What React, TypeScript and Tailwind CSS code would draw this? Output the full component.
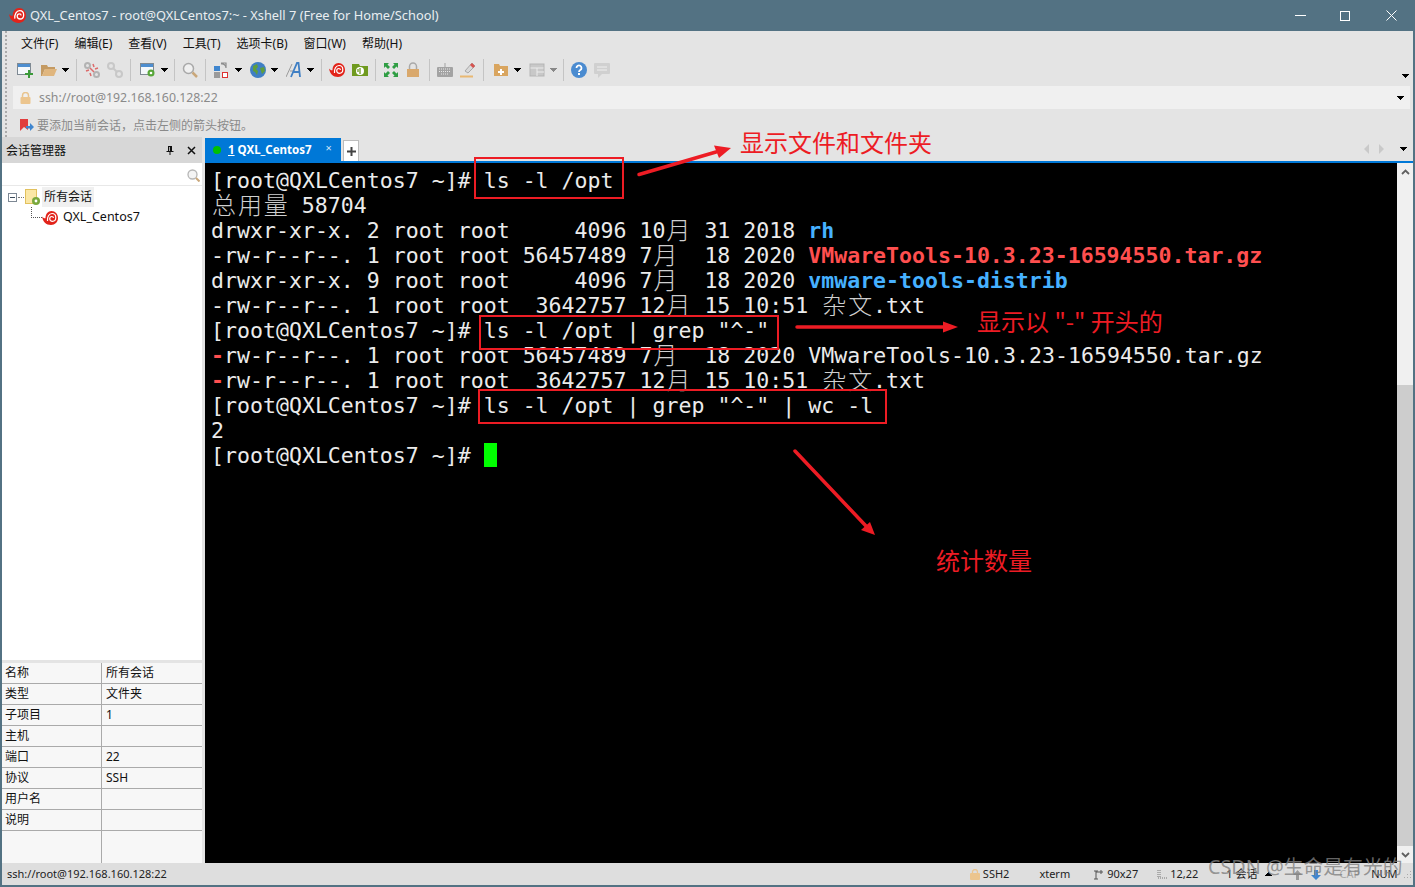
import { ReactNode } from 'react';

const uiFont = "font-['Noto_Sans','Noto_Sans_CJK_SC',sans-serif]";

function Shell({ size = 16 }: { size?: number }) {
  return (
    <svg width={size} height={size} viewBox="0 0 16 16" className="shrink-0">
      <path d="M0 6.500C1 8 2.500 8.500 3.500 8.200 3.500 4 6 1 9.500 1 13.200 1 16 4 16 8c0 4-3 7-7 7C4 15 .800 11.500 0 6.500z" fill="#e2231a" />
      <path d="M5.500 11c-.5-4 1.500-7.500 4.500-7.500 2.500 0 3.800 2 3.800 4 0 2.300-1.600 3.800-3.400 3.800-1.600 0-2.700-1.100-2.700-2.500 0-1.300.9-2.300 2.100-2.300 1 0 1.600.7 1.600 1.500" fill="none" stroke="#fff" strokeWidth="1.200" />
    </svg>
  );
}

function Caret({ color = '#000' }: { color?: string }) {
  return (
    <svg width="7" height="4" viewBox="0 0 7 4" className="shrink-0">
      <path d="M0 0h7v1H6v1H5v1H4v1H3V3H2V2H1V1H0z" fill={color} />
    </svg>
  );
}

function Sep({ ml }: { ml: string }) {
  return <div className={`h-[22px] w-px shrink-0 bg-[#c4c4c4] ${ml}`} />;
}

function ToolIcon({ children }: { children: ReactNode }) {
  return (
    <svg width="16" height="16" viewBox="0 0 16 16" className="shrink-0">
      {children}
    </svg>
  );
}

function Toolbar() {
  return (
    <div className="flex h-[31px] items-center pb-px pl-[10px]">
      <ToolIcon>
        <rect x="0.500" y="1.500" width="13" height="11" fill="#f4f8fb" stroke="#7f8a93" />
        <rect x="1" y="2" width="12" height="3" fill="#4d8ed0" />
        <path d="M11 8h2v3h3v2h-3v3h-2v-3H8v-2h3z" fill="#3a9a3a" />
      </ToolIcon>
      <div className="ml-[8px]">
        <ToolIcon>
          <path d="M0 3h6l1 2h7v2H4L1 14H0z" fill="#c49a62" />
          <path d="M4 7h12l-3 7H1z" fill="#e0b67e" />
        </ToolIcon>
      </div>
      <div className="ml-[5px]"><Caret /></div>
      <Sep ml="ml-[7px]" />
      <div className="ml-[7px]">
        <ToolIcon>
          <circle cx="3.500" cy="3.500" r="2.500" fill="none" stroke="#b3b3b3" strokeWidth="2" />
          <circle cx="12.500" cy="12.500" r="2.500" fill="none" stroke="#b3b3b3" strokeWidth="2" />
          <path d="M6 6l4 4M2 9l3-1M9 2l1 3M14 6l-3 1M7 14l-1-3" stroke="#dd6b6b" strokeWidth="1.500" />
        </ToolIcon>
      </div>
      <div className="ml-[7px]">
        <ToolIcon>
          <circle cx="4" cy="4" r="3" fill="none" stroke="#c8c8c8" strokeWidth="2" />
          <circle cx="12" cy="12" r="3" fill="none" stroke="#c8c8c8" strokeWidth="2" />
          <path d="M6 6l4 4" stroke="#c8c8c8" strokeWidth="2" />
        </ToolIcon>
      </div>
      <Sep ml="ml-[7px]" />
      <div className="ml-[9px]">
        <ToolIcon>
          <rect x="0.500" y="1.500" width="13" height="11" fill="#f4f8fb" stroke="#7f8a93" />
          <rect x="1" y="2" width="12" height="3" fill="#4d8ed0" />
          <circle cx="11" cy="11" r="3.500" fill="#57a639" />
          <circle cx="11" cy="11" r="1.300" fill="#fff" />
        </ToolIcon>
      </div>
      <div className="ml-[5px]"><Caret /></div>
      <Sep ml="ml-[6px]" />
      <div className="ml-[7px]">
        <ToolIcon>
          <circle cx="6.500" cy="6.500" r="5" fill="#f0f0f0" stroke="#a9a9a9" strokeWidth="1.500" />
          <path d="M10.500 10.500l4.500 4.500" stroke="#c9a77a" strokeWidth="2.500" />
        </ToolIcon>
      </div>
      <Sep ml="ml-[7px]" />
      <div className="ml-[8px]">
        <ToolIcon>
          <rect x="0" y="4" width="6" height="5" fill="#3f86cf" />
          <rect x="0" y="10" width="6" height="6" fill="#9a9a9a" />
          <rect x="8.500" y="10.500" width="5" height="5" fill="#fff" stroke="#d33" />
          <path d="M7 1h5v5M12 6a4 4 0 0 0-5-4" fill="none" stroke="#8c8c8c" strokeWidth="1.200" />
        </ToolIcon>
      </div>
      <div className="ml-[5px]"><Caret /></div>
      <div className="ml-[8px]">
        <ToolIcon>
          <circle cx="8" cy="8" r="8" fill="#3f7fc4" />
          <path d="M3 4l4-2 1 3-2 2 2 2-1 4-2-3-2-1zM10 6l4-1 1 4-3 3-1-3z" fill="#5f9e3c" />
        </ToolIcon>
      </div>
      <div className="ml-[5px]"><Caret /></div>
      <div className="ml-[8px]">
        <ToolIcon>
          <path d="M0 15L6 2M4 9h4" stroke="#9a9a9a" strokeWidth="1" fill="none" />
          <path d="M5 15L11 1h1.500L14 15M7.500 10h6" stroke="#3f7fc4" strokeWidth="1.800" fill="none" />
        </ToolIcon>
      </div>
      <div className="ml-[5px]"><Caret /></div>
      <Sep ml="ml-[7px]" />
      <div className="ml-[7px]"><Shell /></div>
      <div className="ml-[7px]">
        <ToolIcon>
          <path d="M0 2h7l1 2h8v10H0z" fill="#6f9a1f" />
          <circle cx="8" cy="9" r="4" fill="#fff" />
          <path d="M8 6v6M6 7v3" stroke="#6f9a1f" strokeWidth="1.300" />
        </ToolIcon>
      </div>
      <Sep ml="ml-[7px]" />
      <div className="ml-[7px]">
        <ToolIcon>
          <path d="M1 1h5L4.500 2.500 7 5 5 7 2.500 4.500 1 6zM15 1v5l-1.500-1.500L11 7 9 5l2.500-2.500L10 1zM1 15v-5l1.500 1.500L5 9l2 2-2.500 2.500L6 15zM15 15h-5l1.500-1.500L9 11l2-2 2.500 2.500L15 10z" fill="#2f9e44" />
        </ToolIcon>
      </div>
      <div className="ml-[6px]">
        <ToolIcon>
          <path d="M4.500 7V4.500a3.500 3.500 0 0 1 7 0V7" fill="none" stroke="#a9a9a9" strokeWidth="1.500" />
          <rect x="2" y="7" width="12" height="8" fill="#d9a86c" />
        </ToolIcon>
      </div>
      <Sep ml="ml-[8px]" />
      <div className="ml-[7px]">
        <ToolIcon>
          <rect x="0" y="5" width="16" height="10" rx="1" fill="#a3a3a3" />
          <path d="M2 7h12M2 9.500h12M4 12h8" stroke="#e8e8e8" strokeDasharray="1 1" />
          <path d="M8 5V1" stroke="#a3a3a3" />
        </ToolIcon>
      </div>
      <div className="ml-[7px]">
        <ToolIcon>
          <path d="M5 9l7-8 3 3-7 7z" fill="#d9d9d9" stroke="#a8a8a8" />
          <path d="M12 1l3 3-2 2-3-3z" fill="#d9534f" />
          <path d="M0 14.500h13" stroke="#e9b872" strokeWidth="2" />
        </ToolIcon>
      </div>
      <Sep ml="ml-[7px]" />
      <div className="ml-[9px]">
        <ToolIcon>
          <path d="M1 2h5l1 2h8v10H1z" fill="#d9a55f" />
          <path d="M7 7h2v2h2v2H9v2H7v-2H5V9h2z" fill="#fff" />
        </ToolIcon>
      </div>
      <div className="ml-[5px]"><Caret /></div>
      <div className="ml-[8px]">
        <ToolIcon>
          <rect x="1" y="2" width="14" height="12" fill="#c8c8c8" stroke="#b5b5b5" />
          <path d="M1.500 6h13M8 6v8M8 10h7" stroke="#ececec" />
        </ToolIcon>
      </div>
      <div className="ml-[5px]"><Caret color="#888" /></div>
      <Sep ml="ml-[6px]" />
      <div className="ml-[7px]">
        <ToolIcon>
          <circle cx="8" cy="8" r="8" fill="#4a8bd0" />
          <path d="M5.500 6a2.500 2.500 0 1 1 3.800 2.100C8.400 8.700 8 9.200 8 10" fill="none" stroke="#fff" strokeWidth="1.800" />
          <rect x="7" y="11" width="2" height="2" fill="#fff" />
        </ToolIcon>
      </div>
      <div className="ml-[7px]">
        <ToolIcon>
          <path d="M1 1h14a1 1 0 0 1 1 1v9a1 1 0 0 1-1 1H8l-4 4v-4H1a1 1 0 0 1-1-1V2a1 1 0 0 1 1-1z" fill="#d0d0d0" />
          <path d="M3 5h10M3 8h10" stroke="#efefef" />
        </ToolIcon>
      </div>
      <div className="ml-auto mr-[4px] mt-[11px]"><Caret /></div>
    </div>
  );
}

function TitleBar() {
  return (
    <div className="flex h-[31px] shrink-0 items-center bg-[#537283] pl-[7px] text-white">
      <Shell size={17} />
      <span className="ml-[4px] text-[12.800px] text-[#e9eef1]">
        QXL_Centos7 - root@QXLCentos7:~ - Xshell 7 (Free for Home/School)
      </span>
      <div className="ml-auto flex items-center">
        <div className="h-[1px] w-[11px] bg-white" />
        <div className="ml-[34px] size-[10px] border border-white" />
        <svg width="11" height="11" viewBox="0 0 11 11" className="ml-[36px] mr-[16px]">
          <path d="M.500.500l10 10M10.500.500l-10 10" stroke="#fff" strokeWidth="1" />
        </svg>
      </div>
    </div>
  );
}

const menus = ['文件(F)', '编辑(E)', '查看(V)', '工具(T)', '选项卡(B)', '窗口(W)', '帮助(H)'];

function TopBars() {
  return (
    <div className="flex h-[106px] shrink-0 bg-[#e4e4e4]">
      <div className="ml-[3px] h-full w-[2px] border-l-2 border-dotted border-[#aaaaaa]" />
      <div className="min-w-0 flex-1">
        <div className="flex h-[24px] items-center gap-[16px] pl-[14px] pt-px text-[12px] text-[#111]">
          {menus.map((m) => (
            <span key={m}>{m}</span>
          ))}
        </div>
        <Toolbar />
        <div className="ml-[6px] mr-[3px] flex h-[23px] items-center bg-[#f0f0f0] pl-[7px] pr-[6px] pt-px text-[12.300px] text-[#8a8a8a]">
          <svg width="11" height="12" viewBox="0 0 11 12">
            <path d="M2.500 6V3.500a3 3 0 0 1 6 0V6" fill="none" stroke="#e8c48f" strokeWidth="1.500" />
            <rect x="0.500" y="5" width="10" height="7" rx="1" fill="#ecc58e" />
          </svg>
          <span className="ml-[8px]">ssh://root@192.168.160.128:22</span>
          <div className="ml-auto"><Caret /></div>
        </div>
        <div className="flex h-[28px] items-center pl-[13px] pt-[5px] text-[12px] text-[#8a8a8a]">
          <svg width="14" height="14" viewBox="0 0 14 14">
            <path d="M0 0h8v11L4 8l-4 4z" fill="#e23d3d" />
            <path d="M6 7h4V4l4 4-4 4V9.500H6z" fill="#3f86cf" />
          </svg>
          <span className="ml-[3px]">要添加当前会话，点击左侧的箭头按钮。</span>
        </div>
      </div>
    </div>
  );
}

const props = [
  ['名称', '所有会话'],
  ['类型', '文件夹'],
  ['子项目', '1'],
  ['主机', ''],
  ['端口', '22'],
  ['协议', 'SSH'],
  ['用户名', ''],
  ['说明', ''],
];

function SessionPanel() {
  return (
    <div className="flex w-[200px] shrink-0 flex-col bg-white text-[12px] text-[#111]">
      <div className="flex h-[26px] shrink-0 items-center bg-[#d7d7d7] pl-[4px] pt-px">
        <span>会话管理器</span>
        <svg width="8" height="9" viewBox="0 0 8 9" className="ml-auto">
          <path d="M2 0h4v5h1.500v1H4.500v3h-1V6H.500V5H2zM3 1v4h.800V1z" fill="#111" />
        </svg>
        <svg width="9" height="9" viewBox="0 0 9 9" className="ml-[13px] mr-[6px]">
          <path d="M1 1l7 7M8 1L1 8" stroke="#111" strokeWidth="1.500" />
        </svg>
      </div>
      <div className="mt-[2px] flex h-[20px] shrink-0 items-center justify-end pr-[2px]">
        <svg width="13" height="13" viewBox="0 0 13 13">
          <circle cx="5.500" cy="5.500" r="4.500" fill="#f4f4f4" stroke="#b5b5b5" strokeWidth="1.300" />
          <path d="M9 9l3.500 3.500" stroke="#c9a77a" strokeWidth="2" />
        </svg>
      </div>
      <div className="flex-1 border-t border-[#e8e8e8] pt-[1px]">
        <div className="flex h-[20px] items-center pl-[6px]">
          <div className="flex size-[9px] items-center justify-center border border-[#7d8894]">
            <div className="h-px w-[5px] bg-[#3a4a5a]" />
          </div>
          <div className="ml-[1px] w-[6px] border-t border-dotted border-[#777]" />
          <svg width="16" height="17" viewBox="0 0 16 17" className="ml-[1px]">
            <rect x="0.500" y="0.500" width="11" height="14" fill="#fbe7a6" stroke="#e2c15e" />
            <circle cx="11" cy="12" r="4" fill="#7aa83c" />
            <circle cx="11" cy="12" r="1.400" fill="#fff" />
          </svg>
          <span className="ml-[1px] flex h-[20px] w-[52px] items-center bg-[#f0f0f0] pl-[2px]">所有会话</span>
        </div>
        <div className="flex h-[21px] items-center pl-[29px]">
          <div className="h-[11px] w-[11px] -translate-y-[5px] border-b border-l border-dotted border-[#555]" />
          <Shell size={16} />
          <span className="ml-[5px] text-[12.500px]">QXL_Centos7</span>
        </div>
      </div>
      <div className="h-[3px] shrink-0 bg-[#e4e4e4]" />
      <div className="shrink-0 bg-[#f7f7f7]">
        {props.map(([k, v]) => (
          <div key={k} className="flex h-[21px] border-b border-[#aaaaaa]">
            <div className="flex w-[100px] items-center border-r border-[#aaaaaa] pl-[3px]">{k}</div>
            <div className="flex items-center pl-[4px]">{v}</div>
          </div>
        ))}
        <div className="h-[32px] w-[100px] border-r border-[#aaaaaa]" />
      </div>
    </div>
  );
}

// one terminal cell is about 12.97px wide, CJK chars take two of them
function Term({ text }: { text: string }) {
  return (
    <>
      {Array.from(text).map((ch, i) =>
        /[\u4e00-\u9fff]/.test(ch) ? (
          <span
            key={i}
            className="relative top-[-2px] inline-block w-[25.950px] text-center align-top font-['Noto_Sans_CJK_SC',sans-serif] text-[24px] leading-[25px] font-light text-[#cfcfcf]"
          >
            {ch}
          </span>
        ) : (
          <span key={i}>{ch}</span>
        ),
      )}
    </>
  );
}

const prompt = '[root@QXLCentos7 ~]# ';

function Terminal() {
  return (
    <div className="min-w-0 flex-1 bg-black pl-[6px] pt-[5px] font-['DejaVu_Sans_Mono',monospace] text-[21.550px] leading-[25px] whitespace-pre text-[#ebebeb]">
      <div className="h-[25px]"><Term text={prompt + 'ls -l /opt'} /></div>
      <div className="h-[25px]"><Term text="总用量 58704" /></div>
      <div className="h-[25px]">
        <Term text="drwxr-xr-x. 2 root root     4096 10月 31 2018 " />
        <span className="font-bold text-[#46b1ff]">rh</span>
      </div>
      <div className="h-[25px]">
        <Term text="-rw-r--r--. 1 root root 56457489 7月  18 2020 " />
        <span className="font-bold text-[#ff4f4f]">VMwareTools-10.3.23-16594550.tar.gz</span>
      </div>
      <div className="h-[25px]">
        <Term text="drwxr-xr-x. 9 root root     4096 7月  18 2020 " />
        <span className="font-bold text-[#46b1ff]">vmware-tools-distrib</span>
      </div>
      <div className="h-[25px]"><Term text="-rw-r--r--. 1 root root  3642757 12月 15 10:51 杂文.txt" /></div>
      <div className="h-[25px]"><Term text={prompt + 'ls -l /opt | grep "^-"'} /></div>
      <div className="h-[25px]">
        <span className="font-bold text-[#ff4f4f]">-</span>
        <Term text="rw-r--r--. 1 root root 56457489 7月  18 2020 VMwareTools-10.3.23-16594550.tar.gz" />
      </div>
      <div className="h-[25px]">
        <span className="font-bold text-[#ff4f4f]">-</span>
        <Term text="rw-r--r--. 1 root root  3642757 12月 15 10:51 杂文.txt" />
      </div>
      <div className="h-[25px]"><Term text={prompt + 'ls -l /opt | grep "^-" | wc -l'} /></div>
      <div className="h-[25px]">2</div>
      <div className="flex h-[25px]">
        <Term text={prompt} />
        <div className="h-[24px] w-[13px] bg-[#00ff00]" />
      </div>
    </div>
  );
}

function Scrollbar() {
  return (
    <div className="flex w-[16px] shrink-0 flex-col bg-[#f0f0f0]">
      <div className="flex h-[17px] shrink-0 items-center justify-center">
        <svg width="9" height="6" viewBox="0 0 9 6">
          <path d="M1 5l3.500-3.500L8 5" fill="none" stroke="#606060" strokeWidth="1.800" />
        </svg>
      </div>
      <div className="mt-[205px] flex-1 bg-[#cdcdcd]" />
      <div className="flex h-[17px] shrink-0 items-center justify-center">
        <svg width="9" height="6" viewBox="0 0 9 6">
          <path d="M1 1l3.500 3.500L8 1" fill="none" stroke="#606060" strokeWidth="1.800" />
        </svg>
      </div>
    </div>
  );
}

function TabRow() {
  return (
    <div className="flex h-[26px] shrink-0 flex-col">
      <div className="flex h-[24px] items-stretch bg-[#e4e4e4]">
        <div className="mt-px flex w-[136px] items-center bg-[#0078d7] pl-[8px] pt-px text-[11.500px] font-bold text-white">
          <div className="size-[8px] rounded-full bg-[#00c000]" />
          <span className="ml-[7px]"><span className="underline">1</span> QXL_Centos7</span>
          <span className="mb-[3px] ml-[14px] text-[11px] font-normal text-[#cfe4f7]">×</span>
        </div>
        <div className="ml-[2px] mt-[3px] flex w-[16px] items-center justify-center border border-b-0 border-[#bdbdbd] bg-white">
          <svg width="9" height="9" viewBox="0 0 9 9">
            <path d="M4.500 0v9M0 4.500h9" stroke="#444" strokeWidth="2" />
          </svg>
        </div>
        <div className="ml-auto flex items-center pr-[6px]">
          <svg width="6" height="10" viewBox="0 0 6 10"><path d="M5 0v10L0 5z" fill="#c9c9c9" /></svg>
          <svg width="6" height="10" viewBox="0 0 6 10" className="ml-[9px]"><path d="M0 0v10l5-5z" fill="#c9c9c9" /></svg>
          <div className="ml-[15px]"><Caret /></div>
        </div>
      </div>
      <div className="h-[2px] bg-[#0078d7]" />
    </div>
  );
}

function StatusBar() {
  return (
    <div className="flex h-[22px] shrink-0 items-center whitespace-nowrap bg-[#dedede] pl-[5px] pt-px text-[11px] text-[#222]">
      <span>ssh://root@192.168.160.128:22</span>
      <svg width="10" height="11" viewBox="0 0 10 11" className="ml-[803px] shrink-0">
        <path d="M2.500 5V3a2.500 2.500 0 0 1 5 0v2" fill="none" stroke="#ecc58e" strokeWidth="1.300" />
        <rect x="0" y="4" width="10" height="7" rx="1" fill="#ecc58e" />
      </svg>
      <span className="ml-[3px]">SSH2</span>
      <span className="ml-[30px]">xterm</span>
      <svg width="9" height="10" viewBox="0 0 9 10" className="ml-[24px] shrink-0">
        <path d="M2 1v8M0 1h4M0 9h4M2 2h7M7 0v4" stroke="#555" fill="none" />
      </svg>
      <span className="ml-[4px]">90x27</span>
      <svg width="10" height="9" viewBox="0 0 10 9" className="ml-[19px] shrink-0">
        <path d="M1 0v8M3 0v8M1 8h9" stroke="#777" strokeDasharray="1 1" fill="none" />
      </svg>
      <span className="ml-[3px]">12,22</span>
      <span className="ml-[28px]">1 会话</span>
      <div className="ml-[8px] mb-[1px] rotate-180"><Caret /></div>
      <svg width="9" height="10" viewBox="0 0 9 10" className="ml-[21px] shrink-0">
        <path d="M3 10V5H0l4.500-5L9 5H6v5z" fill="#9a9a9a" />
      </svg>
      <svg width="10" height="10" viewBox="0 0 10 10" className="ml-[9px] shrink-0">
        <path d="M3 0v5H0l5 5 5-5H7V0z" fill="#3f86cf" />
      </svg>
      <span className="ml-[18px] text-[#a8a8a8]">CAP</span>
      <span className="ml-[11px]">NUM</span>
      <svg width="10" height="10" viewBox="0 0 10 10" className="ml-auto mr-[1px] shrink-0">
        <path d="M8 1h1v1H8zM5 4h1v1H5zM8 4h1v1H8zM2 7h1v1H2zM5 7h1v1H5zM8 7h1v1H8z" fill="#aaa" />
      </svg>
    </div>
  );
}

// red marks somebody drew on top of the screenshot
function Annotations() {
  return (
    <>
      <div className="absolute left-[472px] top-[157px] h-[42px] w-[150px] border-2 border-[#ed1c24]" />
      <div className="absolute left-[477px] top-[315px] h-[35px] w-[300px] border-2 border-[#ed1c24]" />
      <div className="absolute left-[476px] top-[389px] h-[35px] w-[409px] border-2 border-[#ed1c24]" />
      <svg className="absolute left-[-2px] top-0" width="1415" height="887" viewBox="0 0 1415 887" fill="none">
        <path d="M639 174.500L716 152" stroke="#ed1c24" strokeWidth="3.500" strokeLinecap="round" />
        <path d="M731 148L714 145.500L719 158z" fill="#ed1c24" />
        <path d="M797 327H945" stroke="#ed1c24" strokeWidth="3.500" strokeLinecap="round" />
        <path d="M958 327L943 321.500V332.500z" fill="#ed1c24" />
        <path d="M795 451L866 526" stroke="#ed1c24" strokeWidth="3.500" strokeLinecap="round" />
        <path d="M875 535L861 530L870 522z" fill="#ed1c24" />
      </svg>
      <span className="absolute left-[738px] top-[124px] font-['Noto_Sans_CJK_SC',sans-serif] text-[24px] leading-[36px] text-[#ed1c24]">
        显示文件和文件夹
      </span>
      <span className="absolute left-[975px] top-[303px] font-['Noto_Sans_CJK_SC',sans-serif] text-[24px] leading-[36px] whitespace-pre text-[#ed1c24]">
        显示以 "-" 开头的
      </span>
      <span className="absolute left-[934px] top-[542px] font-['Noto_Sans_CJK_SC',sans-serif] text-[24px] leading-[36px] text-[#ed1c24]">
        统计数量
      </span>
      <span className="absolute left-[1206px] top-[853px] whitespace-nowrap font-['Noto_Sans','Noto_Sans_CJK_SC',sans-serif] text-[19.800px] leading-[28px] text-[#808080]/80">
        CSDN @生命是有光的
      </span>
    </>
  );
}

export default function App() {
  return (
    <div className={`relative flex h-[887px] w-[1415px] flex-col overflow-hidden border-x-2 border-b-2 border-[#537283] ${uiFont}`}>
      <TitleBar />
      <TopBars />
      <div className="flex min-h-0 flex-1">
        <SessionPanel />
        <div className="w-[3px] shrink-0 bg-[#e4e4e4]" />
        <div className="flex min-w-0 flex-1 flex-col">
          <TabRow />
          <div className="flex min-h-0 flex-1">
            <Terminal />
            <Scrollbar />
          </div>
        </div>
      </div>
      <StatusBar />
      <Annotations />
    </div>
  );
}
